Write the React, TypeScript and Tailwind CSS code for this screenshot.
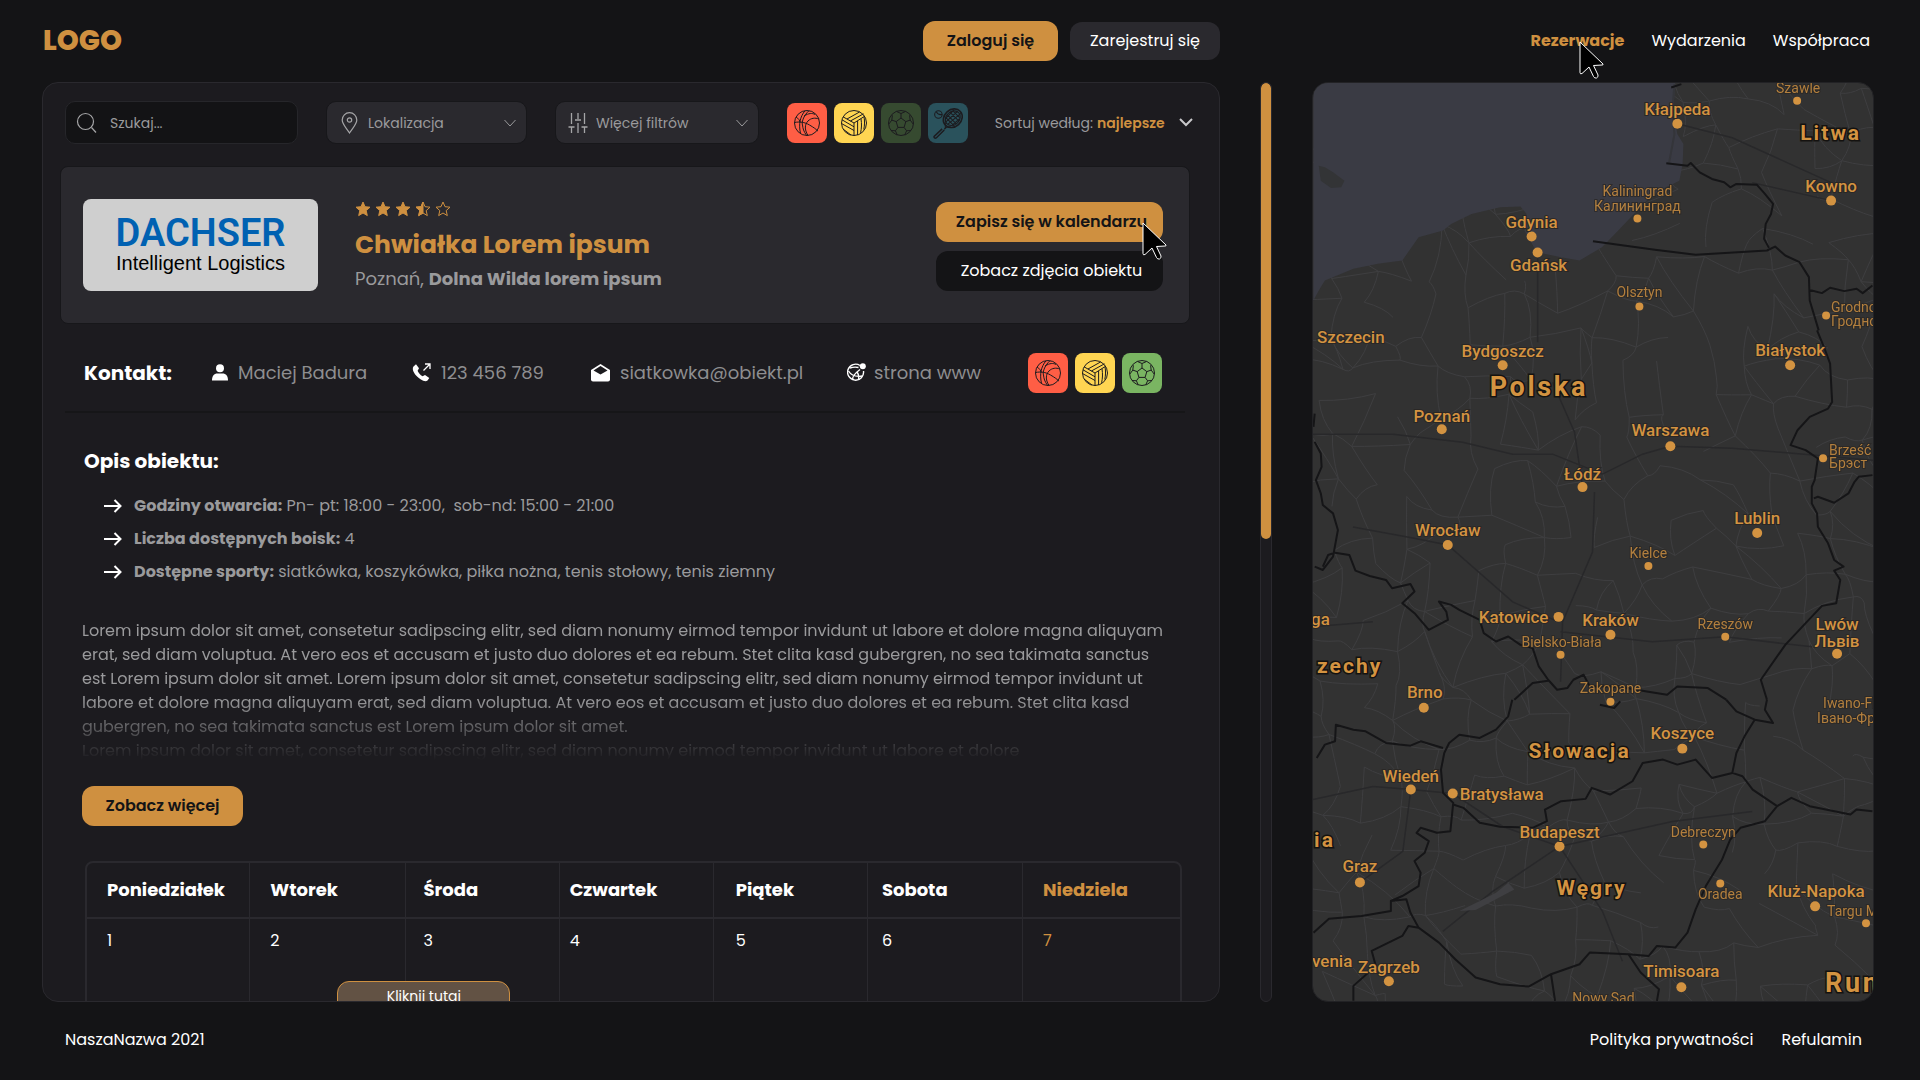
import React from "react";

/* ---------- shared icons ---------- */

function Cursor({ className }: { className: string }) {
  return (
    <svg aria-hidden="true" viewBox="0 0 25 38" width="25" height="38" className={"pointer-events-none absolute z-10 " + className}>
      <path
        d="M1 1 L24 23 Q24.500 24 23 24 L14.500 24.500 L19 34 Q19.500 36 17.500 37 Q15.500 37.500 14.500 35.500 L10 26 L3 32.500 Q1 33.500 1 31.500 Z"
        fill="#000"
        stroke="#fff"
        strokeWidth="1"
        strokeLinejoin="round"
      />
    </svg>
  );
}

function Basketball() {
  return (
    <svg aria-hidden="true" viewBox="0 0 28 28" className="size-7" fill="none" stroke="currentColor" strokeWidth="1">
      <circle cx="14" cy="14" r="12.500" />
      <path d="M1.500 13.500c5-1 10-.5 15 2.500 4 2.300 7 4.500 8.500 6.200" />
      <path d="M12 1.700C7 8 5.500 15 7.500 24.500" />
      <path d="M16 1.700C10 7 8.500 14 9.500 16c.5 4 1 6 4 10.300" />
      <path d="M3 8c2.500 1.500 4 3.500 4 5.500" />
      <path d="M11 7c5-3 8-3 11-1.600" />
      <path d="M15 26.400c-4-6-3-11.500 0-14.400 3-3 7-3.500 11-2" />
    </svg>
  );
}

function Volleyball() {
  return (
    <svg aria-hidden="true" viewBox="0 0 28 28" className="size-7" fill="none" stroke="currentColor" strokeWidth="1">
      <circle cx="14" cy="14" r="12.500" />
      <path d="M14 14v12.500" />
      <path d="M14 14L3 7.800" />
      <path d="M14 14l11-7" />
      <path d="M10.400 12L23.500 4.800" />
      <path d="M7 10L19.500 3" />
      <path d="M2 10.800l12 7" />
      <path d="M1.500 14.500L14 21.500" />
      <path d="M3 20l8 6" />
      <path d="M17.600 12v14" />
      <path d="M21 9.800c.8 5 .6 9.500-.4 14" />
      <path d="M24 8c.8 4 .7 8-.2 12.500" />
    </svg>
  );
}

function Football() {
  return (
    <svg aria-hidden="true" viewBox="0 0 28 28" className="size-7" fill="none" stroke="currentColor" strokeWidth="1" strokeLinejoin="round">
      <circle cx="14" cy="14" r="12.500" />
      <path d="M14 9l4.800 3.600-1.700 5.800h-6.200l-1.700-5.800z" />
      <path d="M14 9V4.500M18.800 12.600l4.400-1.500M17.100 18.400l2.500 3.400M10.900 18.400l-2.500 3.400M9.200 12.600l-4.400-1.500" />
      <path d="M9.500 2.500L14 4.500l4.500-2M23.200 11.100l-.6-4.800M23.200 11.100l3 4M19.600 21.800l4.400-.3M19.600 21.800l-1.800 4M8.400 21.800l1.800 4M8.400 21.800L4 21.500M4.800 11.100l-3 4M4.800 11.100l.6-4.800" />
    </svg>
  );
}

function Tennis() {
  return (
    <svg aria-hidden="true" viewBox="0 0 30 30" className="size-8" fill="none" stroke="currentColor" strokeWidth="1">
      <ellipse cx="19.500" cy="10.500" rx="9.500" ry="8" transform="rotate(-42 19.500 10.500)" strokeWidth="1.500" />
      <ellipse cx="19.500" cy="10.500" rx="7.600" ry="6.200" transform="rotate(-42 19.500 10.500)" />
      <path d="M13 10l8 8M14 7l9 9M17 5l8 8M20 4l6 6M13 14L24 4M15 16L27 6M19 17l7-6M12.500 11l8-8" />
      <path d="M12.500 14.500v5l-1 1.500M17.500 18.500l-4 .5-2 2" />
      <path d="M9.500 20.500L2 27.500c-.5 1.500.8 2 2 1.500l7.500-7.500" strokeWidth="1.400" />
      <circle cx="6" cy="7" r="3.500" />
      <path d="M4 4.500c1 2 3 3 5.500 2.500" />
    </svg>
  );
}

function Star({ fill }: { fill: number }) {
  const d = "M8 1l2 4.700 5 .5-3.800 3.400 1.100 5L8 12l-4.300 2.600 1.100-5L1 6.200l5-.5z";
  const half = "M8 1v11l-4.300 2.600 1.100-5L1 6.200l5-.5z";
  return (
    <svg aria-hidden="true" viewBox="0 0 16 16" className="size-4" fill="none" stroke="#cf9040" strokeWidth="1">
      <path d={d} fill={fill === 1 ? "#cf9040" : "none"} />
      {fill === 0.5 && <path d={half} fill="#cf9040" />}
    </svg>
  );
}

function ThinChevron() {
  return (
    <svg aria-hidden="true" viewBox="0 0 12 8" className="w-3 h-2 shrink-0 pointer-events-none" fill="none" stroke="#9a9a9c" strokeWidth="1">
      <path d="M.5 1L6 7l5.500-6" />
    </svg>
  );
}

function Arrow() {
  return (
    <svg aria-hidden="true" viewBox="0 0 18 14" className="w-[18px] h-3.5 shrink-0" fill="none" stroke="#fff" strokeWidth="2">
      <path d="M0 7h16M10.500 1l6 6-6 6" />
    </svg>
  );
}

/* ---------- header ---------- */

const columns = "grid grid-cols-[minmax(0,1178fr)_12px_minmax(0,562fr)] gap-x-10 pl-[42px] pr-[46px]";

function Header() {
  return (
    <header className={columns + " h-[82px] shrink-0 items-center"}>
      <div className="flex items-center justify-between">
        <a href="#" className="pl-px text-[28px] font-extrabold text-[#cf9040]">LOGO</a>
        <div className="flex items-center gap-3">
          <button className="h-10 w-[135px] rounded-xl bg-[#cf9040] font-semibold text-[#141416]">Zaloguj się</button>
          <button className="h-[38px] w-[150px] rounded-xl bg-[#2a292e] text-white">Zarejestruj się</button>
        </div>
      </div>
      <nav className="col-start-3 flex justify-end gap-[27px] pr-1 text-white">
        <a href="#" className="relative font-bold text-[#cf9040]">
          Rezerwacje
          <Cursor className="left-12 top-3" />
        </a>
        <a href="#">Wydarzenia</a>
        <a href="#">Współpraca</a>
      </nav>
    </header>
  );
}

/* ---------- filters ---------- */

function SportTile({ color, label, children }: { color: string; label: string; children: React.ReactNode }) {
  return (
    <button aria-label={label} className={"flex h-10 w-10 items-center justify-center rounded-lg " + color}>
      {children}
    </button>
  );
}

function Filters() {
  return (
    <div className="flex items-center text-sm text-[#9a9a9c]">
      <label className="flex h-[43px] w-[233px] items-center gap-3 rounded-[10px] border border-[#26262a] bg-[#131315] pl-2.5 pr-3">
        <svg aria-hidden="true" viewBox="0 0 22 22" className="size-[22px] shrink-0" fill="none" stroke="#a5a5a7" strokeWidth="1.200">
          <circle cx="9.500" cy="9.500" r="8" />
          <path d="M15.500 15.500L20 20.500" />
        </svg>
        <input aria-label="Szukaj" placeholder="Szukaj..." className="w-full min-w-0 bg-transparent outline-none placeholder:text-[#9a9a9c]" />
      </label>
      <label className="ml-7 flex h-[43px] w-[201px] items-center rounded-[10px] border border-[#17171a] bg-[#2a292e] pl-3.5 pr-2.5">
        <svg aria-hidden="true" viewBox="0 0 17 22" className="h-[22px] w-[17px] shrink-0" fill="none" stroke="#a5a5a7" strokeWidth="1.200">
          <path d="M8.500 21C5 15.500 1.200 12 1.200 8a7.300 7.300 0 0114.600 0c0 4-3.800 7.500-7.300 13z" />
          <circle cx="8.500" cy="8" r="2.200" />
        </svg>
        <select aria-label="Lokalizacja" className="ml-2.5 min-w-0 flex-1 appearance-none bg-transparent outline-none">
          <option>Lokalizacja</option>
        </select>
        <ThinChevron />
      </label>
      <label className="ml-7 flex h-[43px] w-[204px] items-center rounded-[10px] border border-[#17171a] bg-[#2a292e] pl-3 pr-2.5">
        <svg aria-hidden="true" viewBox="0 0 20 22" className="h-[22px] w-5 shrink-0" fill="none" stroke="#a5a5a7" strokeWidth="1.300">
          <path d="M3.500 1v11M.5 15h6M3.500 15v6M10 1v6M7 8h6M10 11v10M16.500 1v11M13.500 15h6M16.500 15v6" />
        </svg>
        <select aria-label="Więcej filtrów" className="ml-2 min-w-0 flex-1 appearance-none bg-transparent outline-none">
          <option>Więcej filtrów</option>
        </select>
        <ThinChevron />
      </label>
      <div className="ml-7 flex gap-[7px] text-[#1c1b1f]">
        <SportTile label="Koszykówka" color="bg-[#ff5e45]"><Basketball /></SportTile>
        <SportTile label="Siatkówka" color="bg-[#ffd552]"><Volleyball /></SportTile>
        <SportTile label="Piłka nożna" color="bg-[#364a30]"><Football /></SportTile>
        <SportTile label="Tenis" color="bg-[#2a525c]"><Tennis /></SportTile>
      </div>
      <label className="ml-auto mr-0.5 flex items-center whitespace-nowrap text-sm">
        Sortuj według:
        <select className="ml-1 w-[82px] appearance-none bg-transparent font-semibold text-[#cf9040] outline-none">
          <option>najlepsze</option>
        </select>
        <svg aria-hidden="true" viewBox="0 0 14 9" className="h-[9px] w-3.5" fill="none" stroke="#c8c8ca" strokeWidth="2">
          <path d="M1 1l6 6 6-6" />
        </svg>
      </label>
    </div>
  );
}

/* ---------- venue ---------- */

function VenueCard() {
  return (
    <section className="-mx-[5px] mt-[22px] flex h-[158px] items-center rounded-lg border border-[#17171a] bg-[#2a292e] pl-[22px] pr-[26px]">
      <div className="flex h-[92px] w-[235px] flex-col items-center justify-center rounded-lg bg-[#cfcfcf] leading-none">
        <span className="font-['Roboto',sans-serif] text-[38px] font-semibold leading-9 text-[#0061b2]">DACHSER</span>
        <span className="font-['Liberation_Sans',sans-serif] text-xl leading-6 text-black">Intelligent Logistics</span>
      </div>
      <div className="ml-[37px] pt-1.5">
        <div role="img" aria-label="Ocena 3,5 z 5" className="flex gap-1">
          <Star fill={1} />
          <Star fill={1} />
          <Star fill={1} />
          <Star fill={0.5} />
          <Star fill={0} />
        </div>
        <h1 className="mt-2.5 text-[25px] font-bold leading-9 text-[#cf9040]">Chwiałka Lorem ipsum</h1>
        <p className="text-lg leading-8 text-[#9a9a9c]">
          Poznań, <b className="font-bold">Dolna Wilda lorem ipsum</b>
        </p>
      </div>
      <div className="ml-auto flex w-[227px] flex-col gap-[9px] pt-0.5">
        <button className="relative h-10 rounded-xl bg-[#cf9040] pl-1 font-semibold text-[#141416]">
          Zapisz się w kalendarzu
          <Cursor className="left-[206px] top-5" />
        </button>
        <button className="h-10 rounded-xl bg-[#141416] pl-1 text-white">Zobacz zdjęcia obiektu</button>
      </div>
    </section>
  );
}

function Contact() {
  return (
    <section className="flex h-[89px] items-center border-b-2 border-[#161618] pl-[19px] pr-[23px] pt-2.5 text-lg text-[#8e8e90]">
      <h2 className="w-[128px] text-xl font-bold text-white">Kontakt:</h2>
      <span className="flex w-[200px] items-center gap-2.5">
        <svg aria-hidden="true" viewBox="0 0 16 17" className="h-[17px] w-4" fill="#fff">
          <circle cx="8" cy="4.200" r="4" />
          <path d="M0 16.500c0-4.500 2-7 5.500-7h5c3.500 0 5.500 2.500 5.500 7z" />
        </svg>
        Maciej Badura
      </span>
      <span className="flex w-[179px] items-center gap-2.5">
        <svg aria-hidden="true" viewBox="0 0 19 19" className="size-[19px]">
          <path d="M1.500 3.500L4 1.200l3 4-1.400 2.600c.8 2.200 2.600 4.300 5 5.400L13 12l4.300 3-1.800 2.600c-1.500 1-4 .7-7-1.300C4 13.300 1 9 .8 6c0-1 .2-1.900.7-2.500z" fill="#fff" />
          <path d="M11.500 7.500l6-6M13 1h5v5" fill="none" stroke="#fff" strokeWidth="1.300" />
        </svg>
        123 456 789
      </span>
      <span className="flex w-[256px] items-center gap-2.5">
        <svg aria-hidden="true" viewBox="0 0 19 18" className="h-[18px] w-[19px]">
          <path d="M0 6l9.500-6L19 6v9.500q0 2-2 2H2q-2 0-2-2z" fill="#fff" />
          <path d="M2.500 6.500l7-4.500 7 4.500-7 4z" fill="#1c1b1f" />
        </svg>
        siatkowka@obiekt.pl
      </span>
      <a href="#" className="flex items-center gap-2">
        <svg aria-hidden="true" viewBox="0 0 19 19" className="size-[19px]" fill="none" stroke="#fff" strokeWidth="1.400">
          <path d="M13 2.500A8 8 0 1016.500 8" />
          <path d="M3 5c3-1 6-1 8.500-.5M1.500 8c3 5 8 6 14 5M6 17c-1-2 1-6 7-10.500M10 9c1.500 2 2 5 1.500 8" />
          <circle cx="15.800" cy="3.200" r="3" fill="#fff" stroke="none" />
        </svg>
        strona www
      </a>
      <div className="ml-auto flex gap-[7px] text-[#1c1b1f]">
        <SportTile label="Koszykówka" color="bg-[#ff5e45]"><Basketball /></SportTile>
        <SportTile label="Siatkówka" color="bg-[#ffd552]"><Volleyball /></SportTile>
        <SportTile label="Piłka nożna" color="bg-[#7ab562]"><Football /></SportTile>
      </div>
    </section>
  );
}

const facts = [
  ["Godziny otwarcia:", "Pn- pt: 18:00 - 23:00,\u00a0 sob-nd: 15:00 - 21:00"],
  ["Liczba dostępnych boisk:", "4"],
  ["Dostępne sporty:", "siatkówka, koszykówka, piłka nożna, tenis stołowy, tenis ziemny"],
];

function Description() {
  return (
    <section className="pl-[17px] text-[#9a9a9c]">
      <h2 className="mt-8 pl-0.5 text-xl font-bold leading-8 text-white">Opis obiektu:</h2>
      <ul className="mt-3 pl-[22px]">
        {facts.map(([name, value]) => (
          <li key={name} className="flex h-[33px] items-center gap-3">
            <Arrow />
            <span>
              <b className="font-bold">{name}</b> {value}
            </span>
          </li>
        ))}
      </ul>
      <p className="mt-[31px] h-36 overflow-hidden whitespace-nowrap leading-6 [mask-image:linear-gradient(to_bottom,#000_55%,transparent_98%)]">
        Lorem ipsum dolor sit amet, consetetur sadipscing elitr, sed diam nonumy eirmod tempor invidunt ut labore et dolore magna aliquyam
        <br />
        erat, sed diam voluptua. At vero eos et accusam et justo duo dolores et ea rebum. Stet clita kasd gubergren, no sea takimata sanctus
        <br />
        est Lorem ipsum dolor sit amet. Lorem ipsum dolor sit amet, consetetur sadipscing elitr, sed diam nonumy eirmod tempor invidunt ut
        <br />
        labore et dolore magna aliquyam erat, sed diam voluptua. At vero eos et accusam et justo duo dolores et ea rebum. Stet clita kasd
        <br />
        gubergren, no sea takimata sanctus est Lorem ipsum dolor sit amet.
        <br />
        Lorem ipsum dolor sit amet, consetetur sadipscing elitr, sed diam nonumy eirmod tempor invidunt ut labore et dolore
      </p>
      <button className="mt-[23px] h-10 w-[161px] rounded-xl bg-[#cf9040] font-semibold text-[#141416]">Zobacz więcej</button>
    </section>
  );
}

const days = [
  { name: "Poniedziałek", pad: "pl-5", width: "w-[14.9%]" },
  { name: "Wtorek", pad: "pl-5", width: "w-[14.2%]" },
  { name: "Środa", pad: "pl-[18px]", width: "w-[14.1%]" },
  { name: "Czwartek", pad: "pl-2.5", width: "w-[14.1%]" },
  { name: "Piątek", pad: "pl-[22px]", width: "w-[14.1%]" },
  { name: "Sobota", pad: "pl-3.5", width: "w-[14.2%]" },
  { name: "Niedziela", pad: "pl-5", width: "w-[14.4%]" },
];

function Calendar() {
  return (
    <div className="ml-5 mr-[3px] mt-[35px] rounded-t-lg border-2 border-[#2a292e]">
      <table className="w-full table-fixed border-collapse text-left text-white">
        <thead>
          <tr className="h-[55px] border-b-2 border-[#2a292e]">
            {days.map((d, i) => (
              <th
                key={d.name}
                className={
                  d.pad + " " + d.width + " text-lg font-bold " +
                  (i === 6 ? "text-[#cf9040]" : "border-r border-r-[#2a292e]")
                }
              >
                {d.name}
              </th>
            ))}
          </tr>
        </thead>
        <tbody>
          <tr className="h-32">
            {days.map((d, i) => (
              <td
                key={d.name}
                className={
                  d.pad + " relative pt-2.5 align-top " +
                  (i === 6 ? "text-[#cf9040]" : "border-r border-r-[#2a292e]")
                }
              >
                {i + 1}
                {i === 1 && (
                  <button className="absolute left-[87px] top-[62px] z-10 h-9 w-[173px] rounded-xl border border-[#cf9040] bg-[#625244] pb-1.5 text-sm text-white">
                    Kliknij tutaj
                  </button>
                )}
              </td>
            ))}
          </tr>
        </tbody>
      </table>
    </div>
  );
}

/* ---------- map ---------- */

type Label = {
  text: string;
  x: number;
  y: number;
  kind: "city" | "town" | "country" | "big";
  anchor?: "start" | "middle";
  dot?: [number, number];
};

const labels: Label[] = [
  { text: "Kłajpeda", x: 365, y: 32, kind: "city", dot: [365, 41] },
  { text: "Szawle", x: 486, y: 10, kind: "town", dot: [485, 18] },
  { text: "Litwa", x: 488, y: 57, kind: "country", anchor: "start" },
  { text: "Kowno", x: 519, y: 109, kind: "city", dot: [519, 118] },
  { text: "Kaliningrad", x: 325, y: 113, kind: "town" },
  { text: "Калининград", x: 325, y: 128, kind: "town", dot: [325, 136] },
  { text: "Gdynia", x: 219, y: 145, kind: "city", dot: [219, 154] },
  { text: "Gdańsk", x: 226, y: 189, kind: "city", dot: [225, 170] },
  { text: "Olsztyn", x: 327, y: 215, kind: "town", dot: [327, 224] },
  { text: "Grodno", x: 519, y: 230, kind: "town", anchor: "start", dot: [514, 233] },
  { text: "Гродно", x: 519, y: 244, kind: "town", anchor: "start" },
  { text: "Szczecin", x: 4, y: 261, kind: "city", anchor: "start" },
  { text: "Bydgoszcz", x: 190, y: 275, kind: "city", dot: [190, 283] },
  { text: "Polska", x: 177, y: 314, kind: "big", anchor: "start" },
  { text: "Białystok", x: 478, y: 274, kind: "city", dot: [478, 283] },
  { text: "Poznań", x: 129, y: 340, kind: "city", dot: [129, 347] },
  { text: "Warszawa", x: 358, y: 354, kind: "city", dot: [358, 364] },
  { text: "Łódź", x: 270, y: 398, kind: "city", dot: [270, 405] },
  { text: "Brześć", x: 517, y: 373, kind: "town", anchor: "start", dot: [511, 376] },
  { text: "Брэст", x: 517, y: 386, kind: "town", anchor: "start" },
  { text: "Lublin", x: 445, y: 442, kind: "city", dot: [445, 451] },
  { text: "Wrocław", x: 135, y: 454, kind: "city", dot: [135, 463] },
  { text: "Kielce", x: 336, y: 476, kind: "town", dot: [336, 484] },
  { text: "Katowice", x: 166, y: 541, kind: "city", anchor: "start", dot: [246, 535] },
  { text: "Kraków", x: 298, y: 544, kind: "city", dot: [298, 553] },
  { text: "Bielsko-Biała", x: 249, y: 565, kind: "town", dot: [248, 573] },
  { text: "Rzeszów", x: 413, y: 547, kind: "town", dot: [413, 555] },
  { text: "Lwów", x: 525, y: 548, kind: "city", dot: [525, 572] },
  { text: "Львів", x: 525, y: 565, kind: "city" },
  { text: "ga", x: -2, y: 543, kind: "city", anchor: "start" },
  { text: "zechy", x: 4, y: 591, kind: "country", anchor: "start" },
  { text: "Brno", x: 112, y: 616, kind: "city", dot: [111, 626] },
  { text: "Zakopane", x: 298, y: 611, kind: "town", dot: [298, 620] },
  { text: "Koszyce", x: 370, y: 657, kind: "city", dot: [370, 667] },
  { text: "Słowacja", x: 216, y: 676, kind: "country", anchor: "start" },
  { text: "Iwano-Frankiwsk", x: 511, y: 626, kind: "town", anchor: "start" },
  { text: "Івано-Франківськ", x: 505, y: 641, kind: "town", anchor: "start" },
  { text: "Wiedeń", x: 98, y: 700, kind: "city", dot: [98, 708] },
  { text: "Bratysława", x: 147, y: 718, kind: "city", anchor: "start", dot: [140, 712] },
  { text: "Budapeszt", x: 247, y: 757, kind: "city", dot: [247, 765] },
  { text: "Debreczyn", x: 391, y: 756, kind: "town", dot: [391, 763] },
  { text: "ia", x: 1, y: 766, kind: "country", anchor: "start" },
  { text: "Graz", x: 47, y: 791, kind: "city", dot: [47, 801] },
  { text: "Węgry", x: 244, y: 814, kind: "country", anchor: "start" },
  { text: "Oradea", x: 408, y: 818, kind: "town", dot: [408, 802] },
  { text: "Kluż-Napoka", x: 504, y: 816, kind: "city", dot: [503, 825] },
  { text: "Targu Mures", x: 515, y: 835, kind: "town", anchor: "start", dot: [554, 842] },
  { text: "venia", x: -1, y: 886, kind: "city", anchor: "start" },
  { text: "Zagrzeb", x: 76, y: 892, kind: "city", dot: [76, 900] },
  { text: "Timisoara", x: 369, y: 896, kind: "city", dot: [369, 906] },
  { text: "Nowy Sad", x: 291, y: 922, kind: "town" },
  { text: "Rumunia", x: 513, y: 911, kind: "big", anchor: "start" },
];

const labelClass = {
  city: "text-[17px] font-medium",
  town: "text-sm opacity-80",
  country: "text-[21px] font-bold tracking-widest [stroke:#141210] [stroke-width:3px]",
  big: "text-[27px] font-bold tracking-widest [stroke:#141210] [stroke-width:3px]",
};

const sea =
  "M82 246H970L965 330 975 400 990 430 988 490 980 540 930 570 900 600 830 690 790 740 735 780 690 770 630 755 600 690 605 640 590 618 540 620 470 640 420 670 400 690 340 710 300 780 240 790 180 805 110 840 95 870 82 900Z";

const bordersNorth =
  "M948 488L1000 495 1008 487 1030 515 1060 535 1090 545 1105 560 1120 550 1170 552 1190 580 1210 610 1205 640 1192 670 1188 715 1200 742M768 722L920 748 1020 763 1195 750 1215 738 1240 765 1275 785 1298 830 1300 900 1322 990M1298 868L1330 878 1350 862 1385 872 1415 865 1430 878 1454 855M960 260L985 250";

const bordersMiddle =
  "M1318 0L1335 50 1350 100 1355 215 1345 235 1300 260 1270 300 1253 345 1290 360 1320 385 1312 450 1305 470 1305 520 1318 550 1320 590 1345 640 1360 690 1383 710 1360 722 1375 750 1365 820 1330 828 1290 880 1240 945 1180 1050 1195 1110M1310 505L1320 500 1360 518 1395 490 1410 455 1420 440 1454 435M85 250L82 290M85 335L100 370 102 410 88 450 100 490 105 525 130 550 142 600 130 680 105 720 85 710M105 710L118 675 135 668 170 675 185 722 220 738 260 750 275 775 320 762 330 785 300 820 330 850 365 900 412 870 408 845 390 815 420 825 440 840 490 870 500 910 530 935 560 920 590 945 620 955 635 1010 658 1050 680 1080 705 1075 720 1050 745 1035 760 1070 830 1070 900 1085 950 1095 975 1070 1050 1075 1095 1110M658 1053L620 1060 575 1110";

const bordersSouth =
  "M570 0L560 50 530 90 490 115 440 105 415 130 403 160 395 210 400 280 425 310 418 395 385 400 345 385 335 400 365 425 355 460 330 485 345 520 340 560 300 590 272 605 272 635 200 650 120 658 82 700M90 175L110 135 135 125 137 75 180 90 210 95 260 130 320 138 345 125 400 145M425 315L450 325 490 370 540 382 620 385 655 365 650 330 690 305 750 298 765 265 810 285 865 245 890 190 940 180 975 195 1020 180 1060 235 1110 220 1120 160 1140 110 1165 60 1120 35 1095 0M1165 60L1210 70 1190 30 1195 0M1110 220L1135 230 1160 270 1220 320 1255 295 1300 320 1400 345 1415 330 1454 335M1220 320L1190 365 1130 385 1105 420 1085 480 1045 560 1020 630 1000 700 970 745 925 740 905 770 855 765 760 760 735 795 665 825 610 862 540 855 480 835 430 780 390 730 340 685 320 640 310 600 272 605M340 685L315 680 300 710 225 755 235 800 180 860 180 905M665 825L675 905M855 765L885 820 930 870 925 905M785 15L820 25 835 5";

const highways =
  "M-5 352L80 352 150 360 200 372 240 372 290 392M290 392L330 372 358 364 420 366 561 378M270 405L262 350 240 300M282 410L280 470 250 540 248 600M246 540L200 520 135 463 100 456 40 445M248 550L340 560 413 555 500 565M225 170L225 260M98 708L60 705 0 718M247 765L190 745 140 712 98 708M247 765L290 830 310 880M247 765L360 740 440 730M247 765L180 810 130 850M98 708L90 770 47 801M0 545L60 540M365 41L420 55 519 100M440 100L519 118";

/* Minor roads: a jittered lattice whose neighbouring nodes are joined at random. */
function buildRoads() {
  let seed = 11;
  const rnd = () => {
    seed = (seed * 16807) % 2147483647;
    return seed / 2147483647;
  };
  const step = 34;
  const nx = 19;
  const ny = 29;
  const pts: number[][][] = [];
  for (let j = 0; j < ny; j++) {
    pts.push([]);
    for (let i = 0; i < nx; i++) {
      pts[j].push([i * step - 16 + (rnd() - 0.5) * 28, j * step - 16 + (rnd() - 0.5) * 28]);
    }
  }
  let d = "";
  const join = (a: number[], b: number[]) => {
    const mx = (a[0] + b[0]) / 2 + (rnd() - 0.5) * 12;
    const my = (a[1] + b[1]) / 2 + (rnd() - 0.5) * 12;
    d += `M${a[0].toFixed(1)} ${a[1].toFixed(1)}Q${mx.toFixed(1)} ${my.toFixed(1)} ${b[0].toFixed(1)} ${b[1].toFixed(1)}`;
  };
  for (let j = 0; j < ny - 1; j++) {
    for (let i = 0; i < nx - 1; i++) {
      if (rnd() < 0.62) join(pts[j][i], pts[j][i + 1]);
      if (rnd() < 0.62) join(pts[j][i], pts[j + 1][i]);
      if (rnd() < 0.2) join(pts[j][i], pts[j + 1][i + 1]);
    }
  }
  return d;
}

const roads = buildRoads();

function MapPanel() {
  return (
    <section aria-label="Mapa" className="min-h-0 overflow-hidden rounded-2xl border border-[#222225] bg-[#323232]">
      <svg viewBox="0 0 561 920" preserveAspectRatio="xMidYMid slice" className="block h-full w-full" fill="none">
        <path d={roads} stroke="#3e3e40" strokeWidth="1" />
        <path d={highways} stroke="#28282a" strokeWidth="1.500" />
        <g transform="translate(-33 -82) scale(.408163 .333333)">
          <path d={sea} fill="#3a3b44" />
          <path d="M95 495L110 500 130 515 158 540 150 560 125 562 100 540Z" fill="#333436" />
          <path d="M968 250L963 330 968 400 955 485" stroke="#34353a" strokeWidth="5" />
          <path d={bordersNorth} stroke="#151517" strokeWidth="2" strokeLinejoin="round" vectorEffect="non-scaling-stroke" />
        </g>
        <g transform="translate(-33 248) scale(.408163 .333333)">
          <path d={bordersMiddle} stroke="#151517" strokeWidth="2" strokeLinejoin="round" vectorEffect="non-scaling-stroke" />
        </g>
        <g transform="translate(-33 618) scale(.408163 .333333)">
          <path d="M440 635L490 605 530 580 560 550 575 570 530 600 480 632Z" fill="#3f3f42" />
          <path d={bordersSouth} stroke="#151517" strokeWidth="2" strokeLinejoin="round" vectorEffect="non-scaling-stroke" />
        </g>
        <g fill="#d39341" stroke="#2a2725" strokeWidth="2" paintOrder="stroke" className="font-['Roboto',sans-serif]">
          {labels.map((l) => (
            <g key={l.text}>
              {l.dot && <circle cx={l.dot[0]} cy={l.dot[1]} r={l.kind === "town" ? 4 : 5} stroke="none" />}
              <text x={l.x} y={l.y} textAnchor={l.anchor ?? "middle"} className={labelClass[l.kind]}>
                {l.text}
              </text>
            </g>
          ))}
        </g>
      </svg>
    </section>
  );
}

/* ---------- page ---------- */

export default function App() {
  return (
    <div className="flex h-screen flex-col overflow-hidden bg-[#141416] font-['Poppins','Inter',sans-serif] text-base">
      <Header />
      <main className={columns + " min-h-0 flex-1"}>
        <div className="overflow-hidden rounded-2xl border border-[#2a292e] bg-[#1c1b1f] pl-[22px] pr-[34px] pt-[18px]">
          <div className="-mr-[10px]">
            <Filters />
          </div>
          <VenueCard />
          <Contact />
          <Description />
          <Calendar />
        </div>
        <div className="overflow-hidden rounded-md border border-[#2a292e] bg-[#1c1b1f]">
          <div className="h-[456px] rounded-md bg-[#cf9040]" />
        </div>
        <MapPanel />
      </main>
      <footer className="flex h-[78px] shrink-0 items-center justify-between pb-0.5 pl-[65px] pr-[58px] text-white">
        <span>NaszaNazwa 2021</span>
        <nav className="flex gap-7">
          <a href="#">Polityka prywatności</a>
          <a href="#">Refulamin</a>
        </nav>
      </footer>
    </div>
  );
}
